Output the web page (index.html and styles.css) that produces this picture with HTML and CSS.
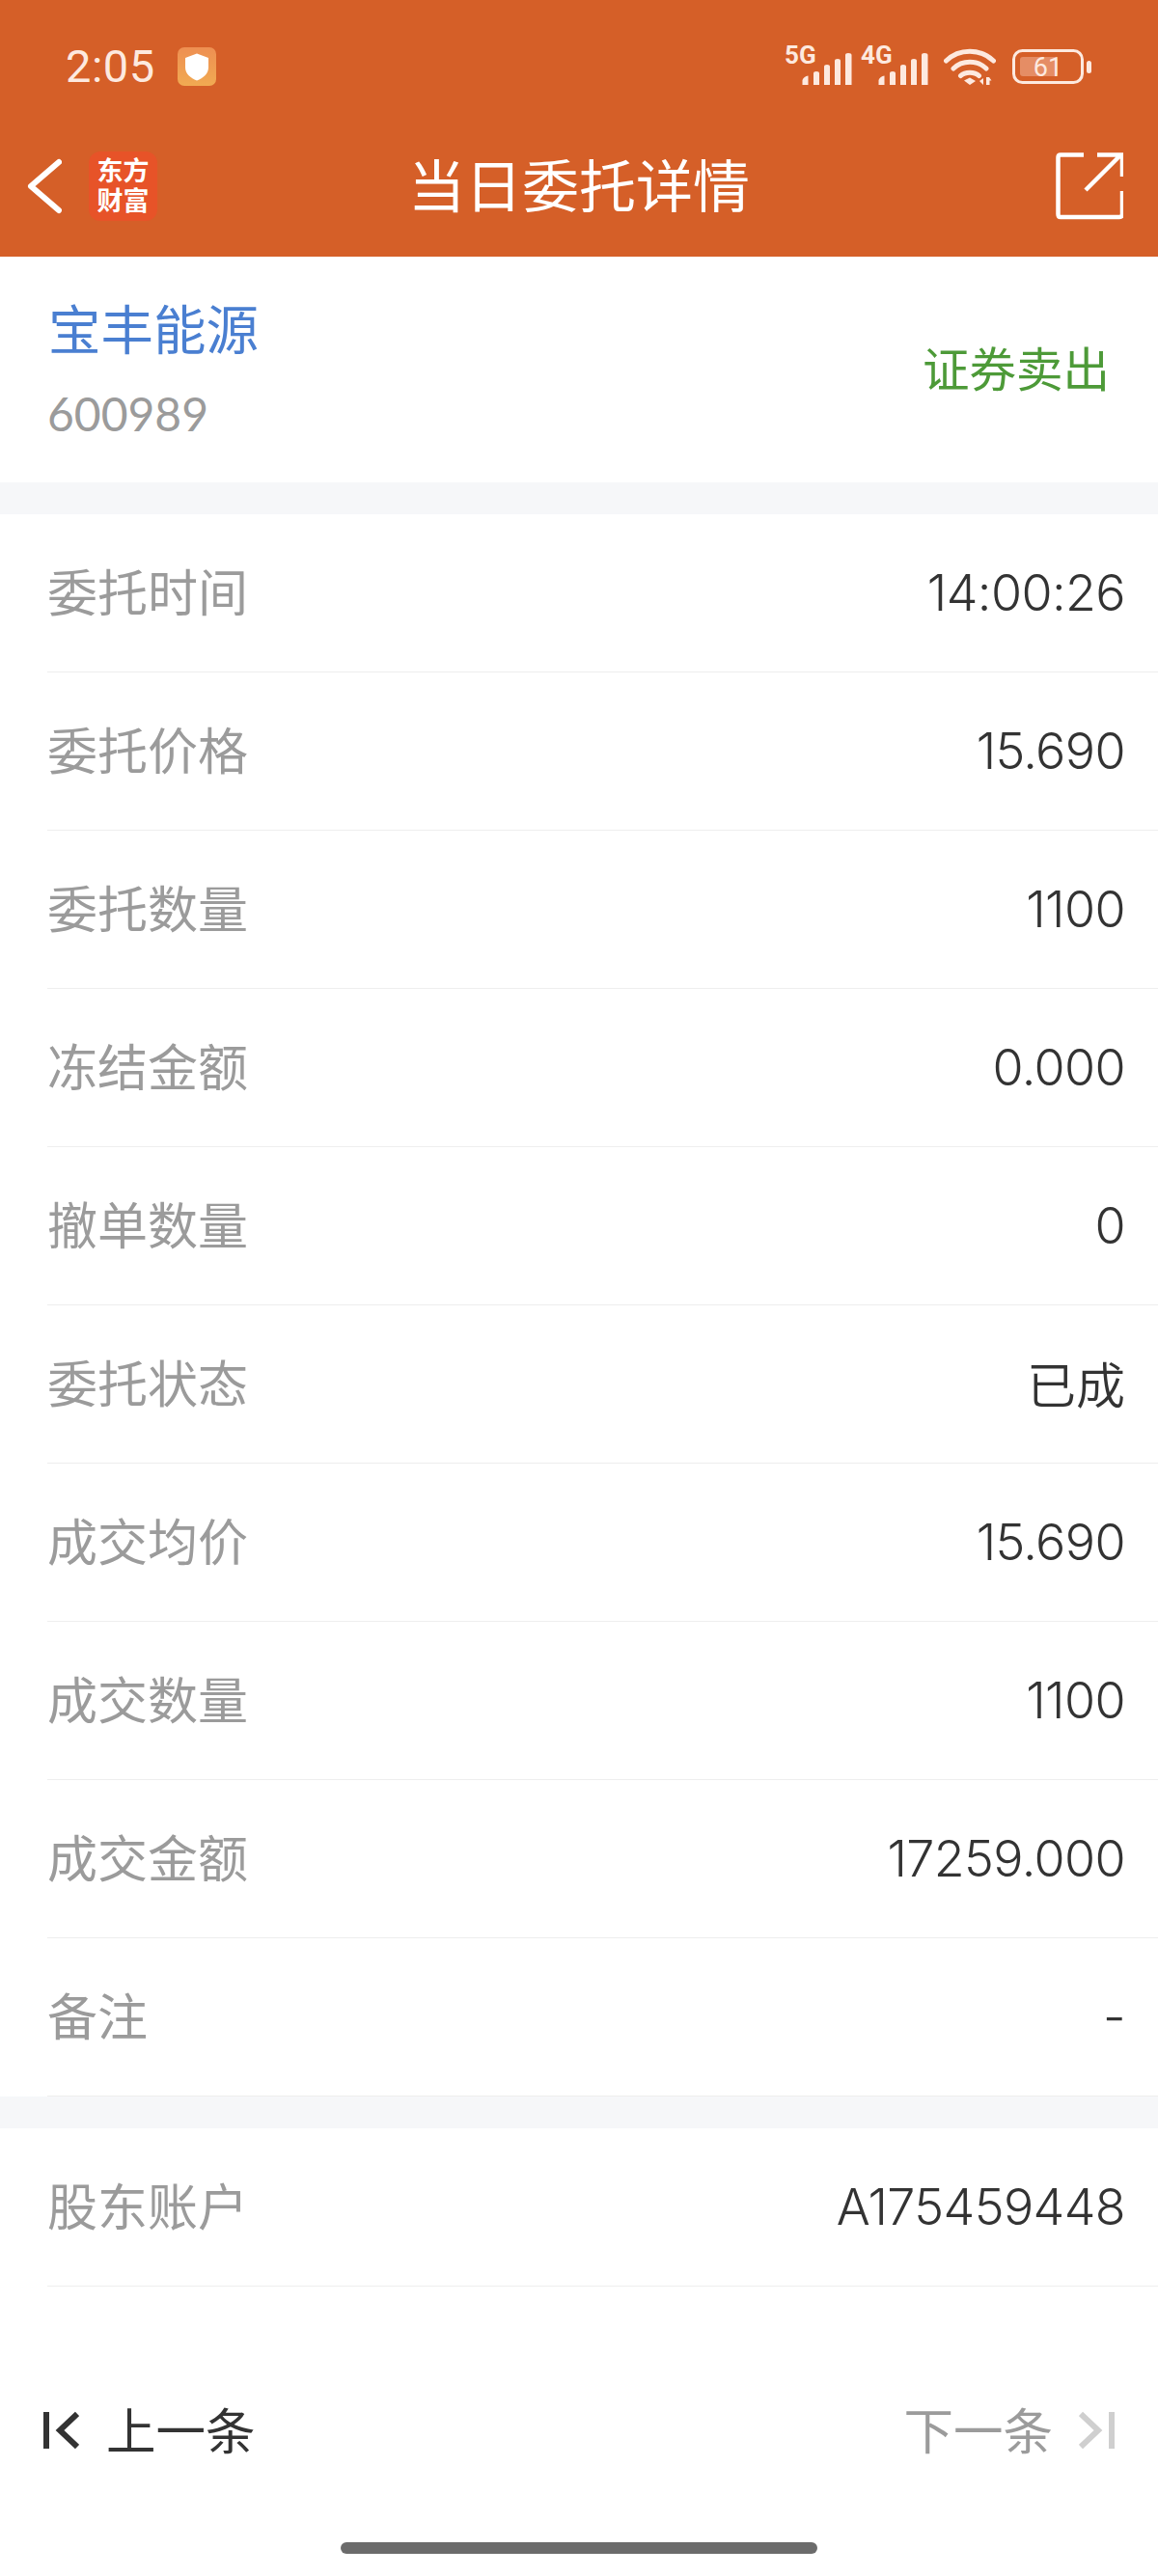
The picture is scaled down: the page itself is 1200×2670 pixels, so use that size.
FILE: index.html
```html
<!DOCTYPE html>
<html lang="zh">
<head>
<meta charset="utf-8">
<title>当日委托详情</title>
<link rel="stylesheet" href="styles.css">
</head>
<body>
<div class="page">
  <header class="top">
    <div class="status">
      <div class="status-left">
        <span class="time">2:05</span>
        <svg class="shield" width="40" height="40" viewBox="0 0 40 40">
          <defs><linearGradient id="sg" x1="0" y1="0" x2="0" y2="1"><stop offset="0" stop-color="#ee8f52"/><stop offset="1" stop-color="#f1aa52"/></linearGradient></defs>
          <rect width="40" height="40" rx="7" fill="url(#sg)"/>
          <path d="M20 6.500 L32 11 V21 C32 27.500 26.500 32 20 34.500 C13.500 32 8 27.500 8 21 V11 Z" fill="#fff"/>
        </svg>
      </div>
      <div class="status-right">
        <svg class="signal" width="71" height="48" viewBox="0 -8 71 48">
          <text x="0" y="17" class="net">5G</text>
          <path d="M18.500 39 V34 Q20 30 24.500 29.500 V39 Z M30 39 V27 Q30 25 33 25 Q36 25 36 27 V39 Z M41 39 V20 Q41 18 44 18 Q47 18 47 20 V39 Z M52 39 V14 Q52 12 55 12 Q58 12 58 14 V39 Z M63 39 V8 Q63 6 66 6 Q69.500 6 69.500 8 V39 Z" fill="#fde9df"/>
        </svg>
        <svg class="signal" width="71" height="48" viewBox="0 -8 71 48">
          <text x="0" y="17" class="net">4G</text>
          <path d="M18.500 39 V34 Q20 30 24.500 29.500 V39 Z M30 39 V27 Q30 25 33 25 Q36 25 36 27 V39 Z M41 39 V20 Q41 18 44 18 Q47 18 47 20 V39 Z M52 39 V14 Q52 12 55 12 Q58 12 58 14 V39 Z M63 39 V8 Q63 6 66 6 Q69.500 6 69.500 8 V39 Z" fill="#fde9df"/>
        </svg>
        <svg class="wifi" width="54" height="40" viewBox="0 0 54 40">
          <path d="M2.500 14 C16 1 38 1 51.500 14 M10 22 C19 13 35 13 44 22 M17.500 29.500 C22 25 32 25 36.500 29.500" fill="none" stroke="#fde9df" stroke-width="5" stroke-linecap="round"/>
          <path d="M21 34.500 L27 31.500 L33 35 L27 39 Z" fill="#fde9df"/>
          <path d="M37 35 L41 32 V39 Z M44 31 H47 L49.500 34.500 H47.500 V39 H44 Z" fill="#fde9df"/>
        </svg>
        <svg class="battery" width="82" height="36" viewBox="0 0 82 36">
          <rect x="1.500" y="1.500" width="71" height="33" rx="9" fill="none" stroke="#fde9df" stroke-width="3"/>
          <rect x="8" y="8" width="39" height="20" rx="3" fill="#e58d65"/>
          <text x="37" y="28" class="bat" text-anchor="middle">61</text>
          <rect x="77" y="12" width="5" height="13" rx="2.500" fill="#fde9df"/>
        </svg>
      </div>
    </div>
    <nav class="nav">
      <div class="nav-left">
        <svg width="36" height="60" viewBox="0 0 36 60"><path d="M33 5 L4 30 L33 55" fill="none" stroke="#fff" stroke-width="6" stroke-linecap="round" stroke-linejoin="round"/></svg>
        <div class="logo">东方<br>财富</div>
      </div>
      <h1 class="nav-title">当日委托详情</h1>
      <svg class="share" width="70" height="70" viewBox="0 0 70 70">
        <path d="M29 2.500 H5 Q2.500 2.500 2.500 5 V64 Q2.500 67 5 67 H66 Q69 67 69 64 V40" fill="none" stroke="#fff" stroke-width="4.500"/>
        <path d="M31 39 L67 3 M43 2.500 H69 V25" fill="none" stroke="#fff" stroke-width="4.500"/>
      </svg>
    </nav>
  </header>

  <section class="stock">
    <div class="stock-id">
      <div class="stock-name">宝丰能源</div>
      <div class="stock-code">600989</div>
    </div>
    <div class="stock-side">证券卖出</div>
  </section>

  <section class="group">
    <div class="row"><span class="label">委托时间</span><span class="value">14:00:26</span></div>
    <div class="row"><span class="label">委托价格</span><span class="value">15.690</span></div>
    <div class="row"><span class="label">委托数量</span><span class="value">1100</span></div>
    <div class="row"><span class="label">冻结金额</span><span class="value">0.000</span></div>
    <div class="row"><span class="label">撤单数量</span><span class="value">0</span></div>
    <div class="row"><span class="label">委托状态</span><span class="value cn">已成</span></div>
    <div class="row"><span class="label">成交均价</span><span class="value">15.690</span></div>
    <div class="row"><span class="label">成交数量</span><span class="value">1100</span></div>
    <div class="row"><span class="label">成交金额</span><span class="value">17259.000</span></div>
    <div class="row"><span class="label">备注</span><span class="value">-</span></div>
  </section>

  <section class="group">
    <div class="row"><span class="label">股东账户</span><span class="value">A175459448</span></div>
  </section>

  <footer class="pager">
    <div class="pager-item prev">
      <svg width="37" height="40" viewBox="0 0 37 40"><path d="M3 1 V39" fill="none" stroke="#333" stroke-width="6"/><path d="M35 3 L17 20 L35 37" fill="none" stroke="#333" stroke-width="6"/></svg>
      <span>上一条</span>
    </div>
    <div class="pager-item next">
      <span>下一条</span>
      <svg width="37" height="40" viewBox="0 0 37 40"><path d="M34 1 V39" fill="none" stroke="#cfcfcf" stroke-width="6"/><path d="M2 3 L20 20 L2 37" fill="none" stroke="#cfcfcf" stroke-width="6"/></svg>
    </div>
  </footer>
  <div class="home-wrap"><div class="home"></div></div>
</div>
</body>
</html>
```

FILE: styles.css
```css
* { box-sizing: border-box; }
html, body { margin: 0; padding: 0; background: #fff; }
body { font-family: Inter, "Noto Sans CJK SC", sans-serif; }
.page { width: 1200px; height: 2670px; display: flex; flex-direction: column; overflow: hidden; background: #fff; }

.top { background: #d55f28; height: 266px; flex: none; }
.status { height: 120px; padding: 49px 69px 0 68px; display: flex; justify-content: space-between; align-items: flex-start; }
.status-left { display: flex; align-items: center; gap: 23px; height: 40px; }
.time { font: 400 47px/40px Roboto, sans-serif; color: #fde9df; letter-spacing: 0.5px; }
.shield { display: block; }
.status-right { display: flex; align-items: flex-start; gap: 8px; }
.status-right svg { display: block; }
.signal { margin-top: -8px; }
.net { font: 700 26px Roboto, sans-serif; fill: #fde9df; }
.bat { font: 400 27px Roboto, sans-serif; fill: #fde9df; }
.wifi { margin-left: 7px; }
.battery { margin-left: 9px; margin-top: 2px; }

.nav { height: 146px; padding: 0 36px 0 28px; display: flex; align-items: center; justify-content: space-between; position: relative; }
.nav-left { display: flex; align-items: center; gap: 28px; }
.nav-left svg { display: block; }
.logo { width: 71px; height: 72px; border-radius: 12px; background: #e75328; color: #fff; font: 700 27px/31px "Noto Sans CJK SC", sans-serif; text-align: center; padding-top: 3px; white-space: nowrap; }
.nav-title { position: absolute; left: 0; right: 0; top: 0; margin: 0; text-align: center; font: 400 59px/140px "Noto Sans CJK SC", sans-serif; color: #fff; }
.share { display: block; }

.stock { height: 234px; flex: none; padding: 0 50px; display: flex; align-items: center; justify-content: space-between; }
.stock-id { display: flex; flex-direction: column; }
.stock-name { font: 400 54.500px/76px "Noto Sans CJK SC", sans-serif; color: #4a7fd1; margin-top: -4px; }
.stock-code { font: 400 48px/64px Lato, sans-serif; margin-top: 20px; margin-left: -1px; color: #9b9b9b; }
.stock-side { font: 400 48.500px/60px "Noto Sans CJK SC", sans-serif; color: #4d9a38; padding-bottom: 6px; }

.group { border-top: 33px solid #f6f7f9; flex: none; }
.row { height: 164px; margin-left: 49px; padding-right: 34px; border-bottom: 1px solid #eeeeee; display: flex; align-items: center; justify-content: space-between; }
.label { font: 400 52px/60px "Noto Sans CJK SC", sans-serif; color: #9b9b9b; padding-bottom: 6px; }
.value { font: 350 52px/60px Inter, "Noto Sans CJK SC", sans-serif; color: #333; letter-spacing: -0.6px; }
.value.cn { font: 350 51px/60px "Noto Sans CJK SC", sans-serif; letter-spacing: 0; padding-bottom: 4px; }

.pager { margin-top: 114px; height: 70px; padding: 0 45px; display: flex; justify-content: space-between; align-items: center; flex: none; }
.pager-item { display: flex; align-items: center; gap: 28px; font: 400 51.500px/70px "Noto Sans CJK SC", sans-serif; }
.pager-item span { padding-bottom: 4px; }
.pager-item svg { display: block; }
.prev { color: #333; }
.next { color: #9b9b9b; gap: 27px; }

.home-wrap { flex: 1; display: flex; justify-content: center; align-items: flex-start; padding-top: 81px; }
.home { width: 494px; height: 12px; border-radius: 6px; background: #6b6b6b; }
```
